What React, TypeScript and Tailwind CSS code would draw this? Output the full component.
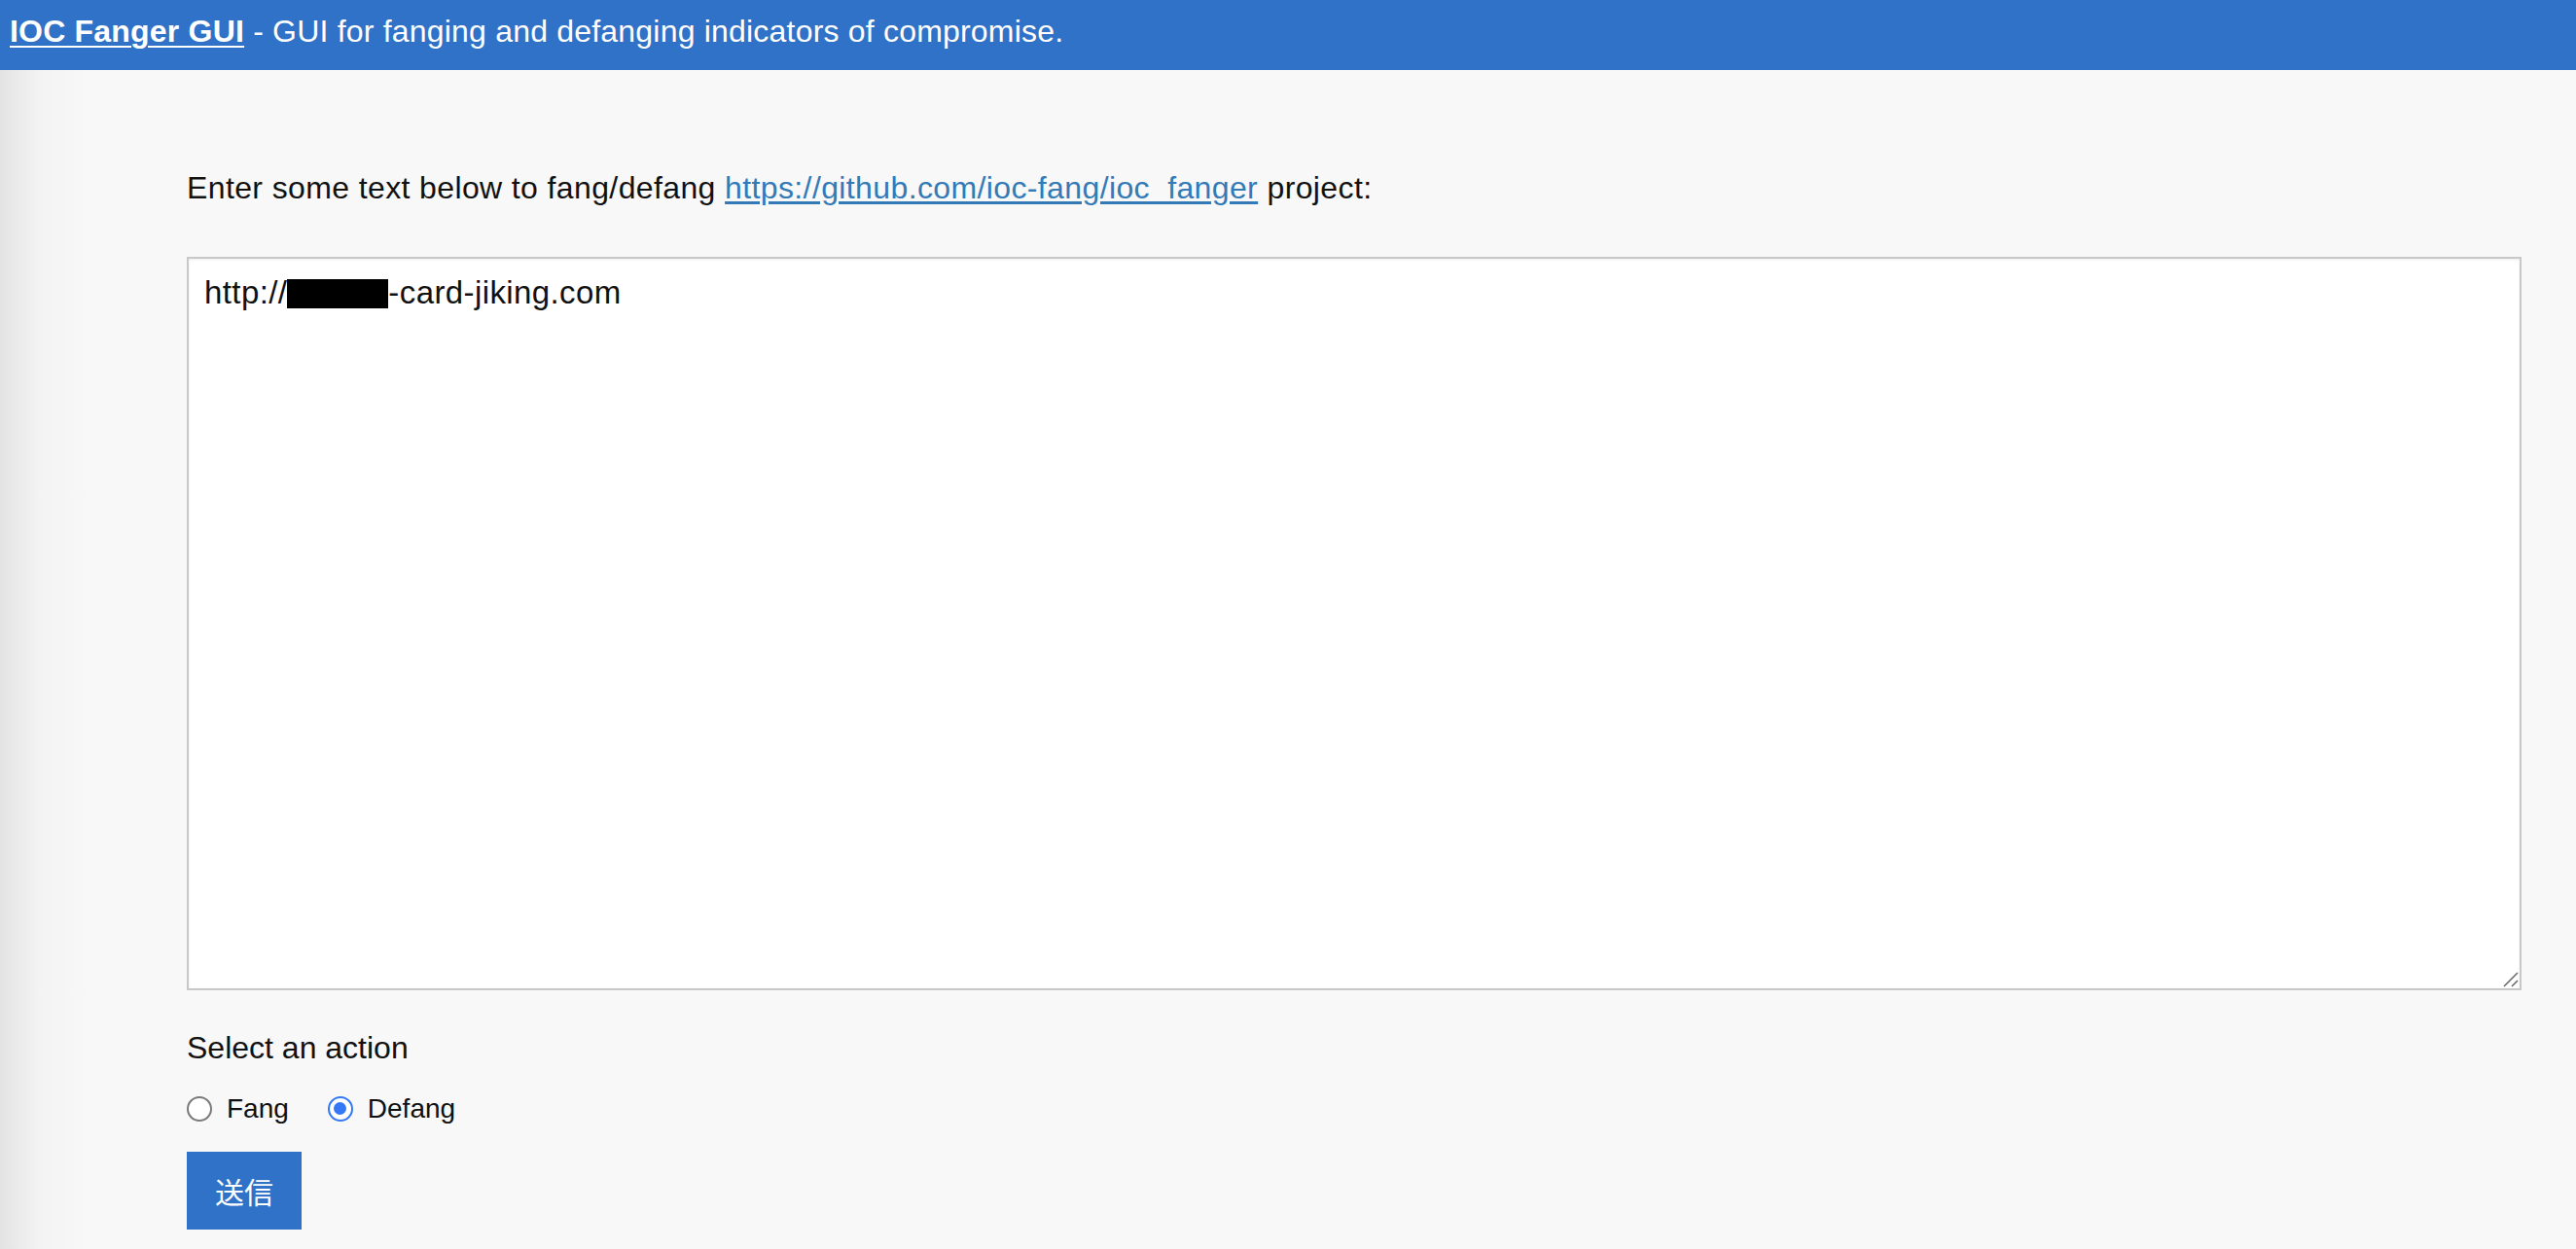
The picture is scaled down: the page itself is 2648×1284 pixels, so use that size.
import { useState } from "react";

const font = "font-['Liberation_Sans','Helvetica',Arial,sans-serif]";

function Radio({ checked, label, onClick }: { checked: boolean; label: string; onClick: () => void }) {
  return (
    <label className="flex cursor-pointer items-center gap-[15px]" onClick={onClick}>
      {checked ? (
        <span className="grid h-[26px] w-[26px] place-items-center rounded-full border-[2.5px] border-[#3478f6] bg-white">
          <span className="h-[13px] w-[13px] rounded-full bg-[#3478f6]" />
        </span>
      ) : (
        <span className="h-[26px] w-[26px] rounded-full border-[2px] border-[#7a7a7a] bg-white" />
      )}
      <span className="text-[28px]">{label}</span>
    </label>
  );
}

export default function App() {
  const [action, setAction] = useState<"fang" | "defang">("defang");

  return (
    <div className={`${font} min-h-[1284px] bg-[#f8f8f8] text-[32px] leading-[37px] text-[#111]`}>
      <header className="flex h-[72px] items-start bg-[#2f72c7] px-[10px] pt-[14px] tracking-[0.2px] text-white">
        <a href="#" className="font-bold underline decoration-[2px] underline-offset-[4px]">
          IOC Fanger GUI
        </a>
        <span className="whitespace-pre"> - GUI for fanging and defanging indicators of compromise.</span>
      </header>

      <main className="min-h-[1212px] bg-[linear-gradient(to_right,#e3e3e3,#f3f3f3_40px,#f8f8f8_90px)] pl-[192px] pr-[56px] pt-[103px]">
        <p className="tracking-[0.38px]">
          Enter some text below to fang/defang{" "}
          <a href="#" className="text-[#337ab7] underline underline-offset-[3px]">
            https://github.com/ioc-fang/ioc_fanger
          </a>{" "}
          project:
        </p>

        <div className="relative mt-[52px] h-[754px] border-[2px] border-[#c8c8c8] bg-white pl-[16px] pt-[16px] text-[33px] tracking-[0.4px] shadow-[inset_0_1px_3px_rgba(0,0,0,0.08)]">
          <span>http://</span>
          <span className="inline-block h-[30px] w-[104px] bg-black align-[-5px]" />
          <span>-card-jiking.com</span>
          <svg className="absolute bottom-[1px] right-[1px] h-[16px] w-[16px]" viewBox="0 0 16 16">
            <line x1="1" y1="15" x2="15" y2="1" stroke="#6b6b6b" strokeWidth="1.6" />
            <line x1="9" y1="15" x2="15" y2="9" stroke="#6b6b6b" strokeWidth="1.6" />
          </svg>
        </div>

        <div className="mt-[41px]">Select an action</div>

        <div className="mt-[25px] flex items-center gap-[40px]">
          <Radio checked={action === "fang"} label="Fang" onClick={() => setAction("fang")} />
          <Radio checked={action === "defang"} label="Defang" onClick={() => setAction("defang")} />
        </div>

        <button className="mt-[26px] grid h-[80px] w-[118px] place-items-center bg-[#2f72c7] font-['Noto_Sans_CJK_JP',sans-serif] text-[30px] text-white">
          送信
        </button>
      </main>
    </div>
  );
}
